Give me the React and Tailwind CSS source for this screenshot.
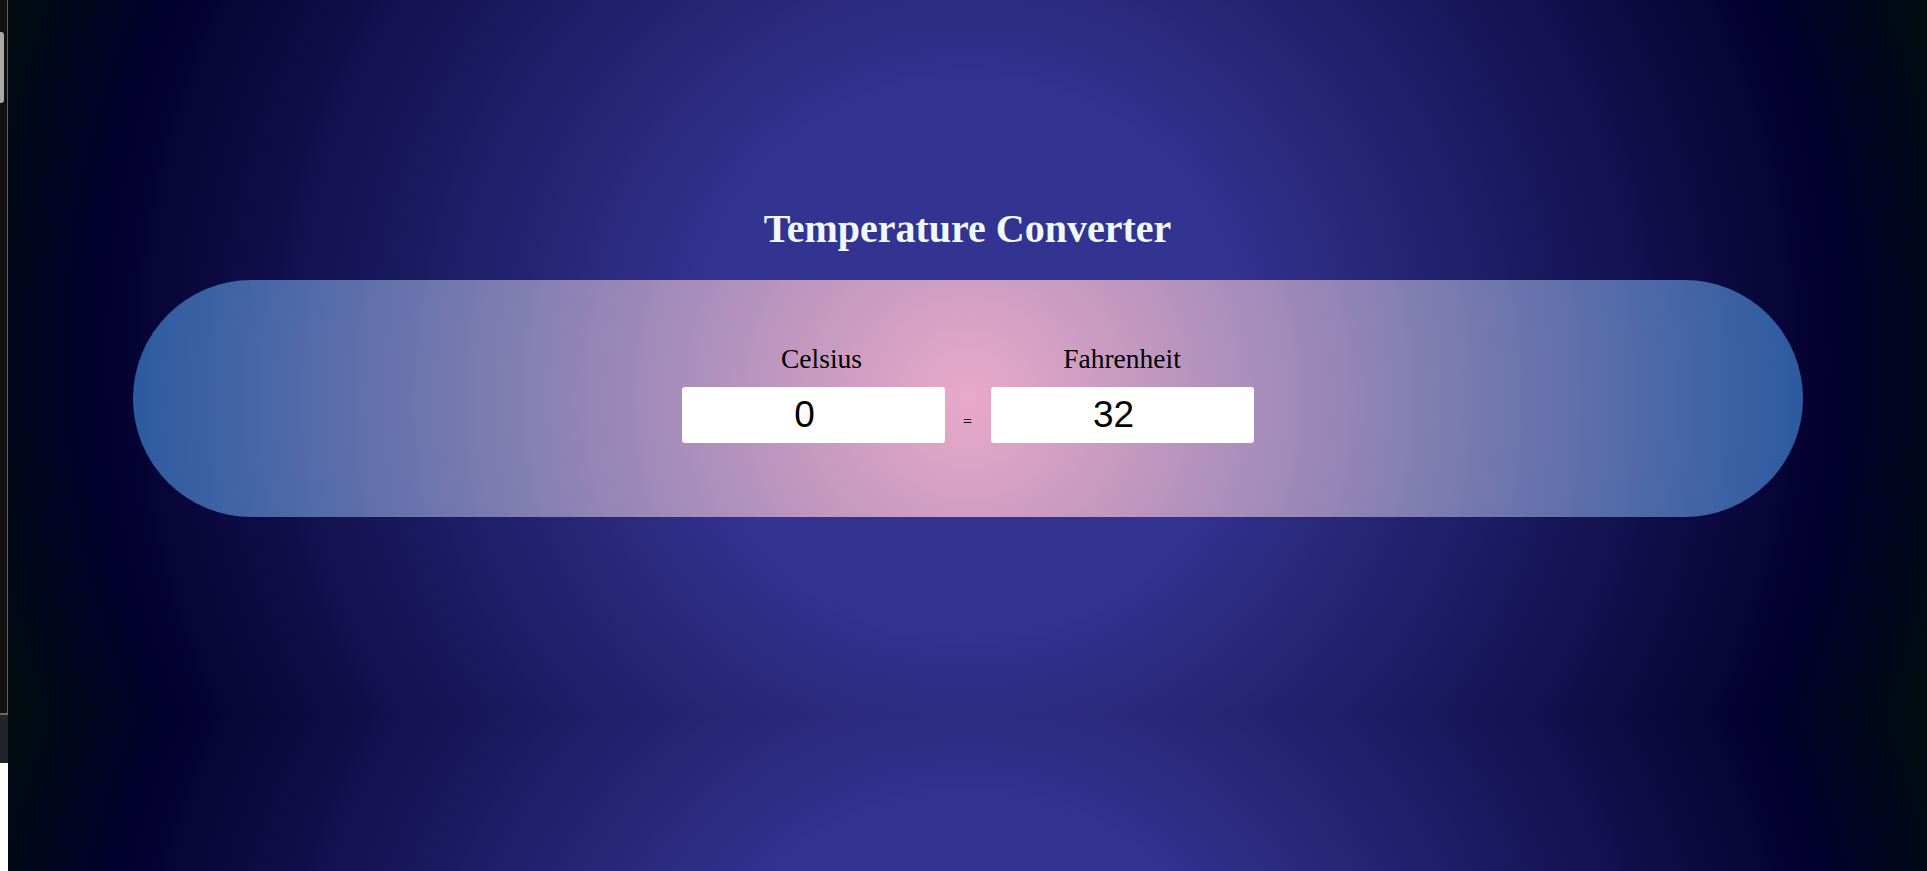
import { useState } from 'react';

const serif = "font-['Liberation_Serif','Times_New_Roman',serif]";

const ScreenEdge = () => (
  <div className="flex w-2 shrink-0 flex-col">
    <div className="h-[713px] border-r border-[#5f5f5f] bg-[#121110] pt-[32px]">
      <div className="h-[71px] w-[4px] rounded-r-[3px] bg-[#a9a9a9]" />
    </div>
    <div className="h-[2px] bg-[#6a6a6a]" />
    <div className="h-[48px] bg-[#22232b]" />
    <div className="flex-1 bg-white" />
  </div>
);

const Field = ({ value, onChange, label }) => (
  <input
    aria-label={label}
    value={value}
    onChange={onChange}
    className="h-[56px] w-[263px] rounded-[3px] bg-white pr-[17px] text-center font-['Liberation_Sans',Arial,sans-serif] text-[37px] text-black outline-none"
  />
);

const toF = (c) => {
  const n = parseFloat(c);
  if (Number.isNaN(n)) return '';
  return String(Math.round((n * 9 / 5 + 32) * 100) / 100);
};

const toC = (f) => {
  const n = parseFloat(f);
  if (Number.isNaN(n)) return '';
  return String(Math.round(((n - 32) * 5 / 9) * 100) / 100);
};

export default function App() {
  const [celsius, setCelsius] = useState('0');
  const [fahrenheit, setFahrenheit] = useState('32');

  return (
    <div className="flex min-h-screen">
      <ScreenEdge />
      <main className="flex-1 bg-[radial-gradient(circle,#333391_26%,#03002e_85%,#000d0e_100%)] bg-[length:100%_715px] bg-repeat-y pt-[206px]">
        <h1 className={`${serif} text-center text-[40px] font-bold leading-[46px] text-[#f0f8ff]`}>
          Temperature Converter
        </h1>

        <section className="mx-auto mt-[28px] h-[237px] w-[1670px] rounded-[120px] bg-[radial-gradient(circle,#eaa9c9_0%,#2a5a9f_100%)] pt-[63px]">
          <div className={`${serif} flex h-[32px] justify-center text-[27.5px] leading-[32px] text-black`}>
            <div className="w-[263px] pl-[17px] text-center">Celsius</div>
            <div className="w-[46px]" />
            <div className="w-[263px] text-center">Fahrenheit</div>
          </div>

          <div className="mt-[12px] flex items-baseline justify-center gap-[18px]">
            <Field
              label="Celsius"
              value={celsius}
              onChange={(e) => {
                setCelsius(e.target.value);
                setFahrenheit(toF(e.target.value));
              }}
            />
            <span className={`${serif} w-[10px] text-center text-[16px] text-black`}>=</span>
            <Field
              label="Fahrenheit"
              value={fahrenheit}
              onChange={(e) => {
                setFahrenheit(e.target.value);
                setCelsius(toC(e.target.value));
              }}
            />
          </div>
        </section>
      </main>
    </div>
  );
}
